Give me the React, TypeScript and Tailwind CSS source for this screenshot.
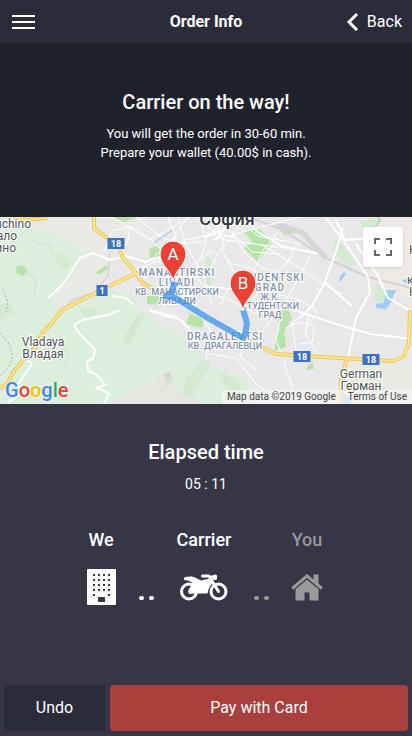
const blocks = [
  "M94 217 L112 217 L150 240 L190 217",
  "M104 252 L112 231 L130 226 L150 238 L172 262",
  "M130 226 L128 240 L120 256",
  "M136 217 L160 236 L178 244 L206 241",
  "M153 258 L172 240 L188 217",
  "M133 271 L160 260 L186 240 L206 236 L232 217",
  "M140 280 L158 272 L176 280 L196 262 L214 250",
  "M178 217 L186 246 L204 276 L212 306",
  "M200 217 L206 244 L196 268 L178 300",
  "M206 232 L226 240 L262 245 L316 252",
  "M214 217 L224 243 L205 278",
  "M232 232 L244 252 L262 268 L284 274",
  "M242 222 L222 250 L236 276 L220 304",
  "M278 232 L262 252 L248 284",
  "M262 245 L300 268 L322 284 L342 294",
  "M296 244 L288 262 L266 282 L250 304",
  "M310 256 L300 276 L286 300 L262 332",
  "M270 292 L300 300 L318 312 L302 332",
  "M206 292 L230 300 L256 314 L274 308",
  "M190 300 L210 330 L206 360",
  "M266 296 L280 320 L276 340 L284 362 L294 392",
  "M300 318 L292 322 L296 352",
  "M308 314 L306 336 L318 354",
  "M286 328 L298 322 L314 326 L312 342 L300 344",
  "M210 354 L236 358 L256 384 L276 399",
  "M150 310 L176 316 L190 330 L196 348",
  "M246 338 L240 356 L256 370",
  "M212 240 L300 217",
  "M222 224 L252 252 L280 254",
  "M236 217 L258 236 L300 244",
  "M226 262 L250 268 L278 286",
  "M168 217 L176 236 L170 250",
  "M158 262 L190 270 L204 286 L240 290",
  "M196 217 L214 232 L236 238",
];

const majorStreets = [
  "M343 227 L337 248 L325 282 L312 306 L300 318",
  "M336 220 L345 240 L372 238",
  "M326 218 L346 244 L368 277",
  "M368 277 L370 292 L356 318 L348 358",
  "M325 282 L338 294 L352 306",
  "M294 310 L330 322 L370 334 L412 339",
  "M356 244 L378 276 L388 298 L412 312",
  "M206 237 L246 219",
  "M216 240 L232 217",
  "M248 222 L258 232 L282 246 L318 254",
  "M48 298 L60 287 L68 277 L80 258 L93 253 L110 260 L127 256 L145 262 L160 257",
  "M120 310 L108 315 L82 320 L74 325 L78 332 L86 340 L95 350 L93 359 L87 361 L88 371 L96 374 L105 385 L96 388 L109 393 L104 404",
  "M149 310 L166 316 L180 319 L192 332",
  "M28 360 L32 364 L24 376 L18 384 L22 392 L8 403",
  "M112 296 L126 298 L134 305",
];

const highways = [
  "M94 217 L94 228 L107 238 L118 245 L123 258 L135 272 L143 283 L163 295",
  "M135 274 L107 287 L62 310 L52 323 L43 332 L35 348 L23 360 L13 373 L7 384 L0 388",
  "M13 216 L27 220 L48 218",
  "M243 338 L261 347 L276 354 L339 358 L393 361 L403 357 L409 343 L410 310",
  "M347 358 L341 380 L341 404",
];

function RoadShield({ x, y, label }: { x: number; y: number; label: string }) {
  const width = label.length > 1 ? 17 : 11;
  return (
    <g>
      <rect x={x - width / 2} y={y - 6} width={width} height="11" fill="#3a73c4" />
      <text x={x} y={y + 3} fontSize="9" fontWeight="700" fill="#fff" textAnchor="middle">
        {label}
      </text>
    </g>
  );
}

function Pin({ x, y, label }: { x: number; y: number; label: string }) {
  return (
    <g transform={`translate(${x} ${y})`}>
      <path
        d="M0 0 C-1 -11 -13 -17 -13 -28 A13 13 0 1 1 13 -28 C13 -17 1 -11 0 0 Z"
        fill="#ea4335"
        stroke="#fff"
        strokeWidth="1"
      />
      <text x="0" y="-22" fontSize="17" fill="#fff" textAnchor="middle">
        {label}
      </text>
    </g>
  );
}

function MapDrawing() {
  return (
    <svg
      className="block h-full w-full"
      viewBox="0 217 412 187"
      preserveAspectRatio="xMidYMid slice"
      fontFamily="Roboto, sans-serif"
      role="img"
      aria-label="Route map"
    >
      <rect x="0" y="217" width="412" height="187" fill="#e7e8e7" />
      <path d="M0 217 H92 L106 240 L104 270 L90 292 L50 310 L0 310 Z" fill="#e8eae3" />
      <path d="M0 226 L22 228 L48 232 L68 240 L88 250 L82 258 L68 279 L50 300 L62 310 L110 288 L132 296 L140 310 L158 324 L192 340 L206 366 L244 376 L262 404 H0 Z" fill="#dcefdc" />
      <path d="M20 217 L90 217 L102 240 L84 252 L60 236 L34 228 Z" fill="#eae9e4" />
      <path d="M112 404 L126 392 L148 386 L158 374 L170 374 L176 390 L192 394 L200 404 Z" fill="#e5e7df" />
      <path d="M140 310 L158 308 L176 318 L192 324 L190 336 L160 324 Z" fill="#e7e8e7" />
      <path d="M364 217 H412 V300 L388 296 L368 276 L384 250 Z" fill="#eeeae3" />
      <path d="M352 360 L412 362 V404 H330 L335 380 Z" fill="#e9ebe3" />
      <path d="M30 344 L48 340 L54 352 L40 360 L26 358 Z" fill="#e4e9e1" />
      <g fill="#d3e9d0">
        <path d="M0 304 L8 302 L14 312 L0 320 Z" />
        <path d="M122 340 L138 314 L146 312 L134 336 L128 346 Z" />
        <path d="M186 380 L204 358 L212 364 L190 396 L182 398 Z" />
        <path d="M60 252 L72 262 L66 270 L56 262 Z" />
        <path d="M80 310 L92 306 L100 312 L86 320 Z" />
        <path d="M216 370 L236 380 L252 404 L232 398 Z" />
        <path d="M336 238 L356 262 L348 268 L332 250 Z" />
        <path d="M376 282 L390 296 L384 312 L374 298 Z" />
        <path d="M360 222 L374 217 L384 219 L366 236 Z" />
        <path d="M206 255 L212 262 L210 286 L206 284 Z" />
      </g>
      <path d="M30 240 L50 246 L58 262 M24 268 L36 280 L34 296 M60 340 L68 354 L64 370 M130 330 L138 320 M160 392 L172 380" fill="none" stroke="#cfe0cd" strokeWidth="3" opacity=".4" />
      <path d="M164 374 L170 372 L172 378 L166 382 Z" fill="#d3d5d5" />
      <g fill="#b7e3ab">
        <path d="M16 266 L24 266 L27 270 L24 276 L17 274 Z" />
        <path d="M96 272 L107 265 L108 269 L98 275 Z" />
        <path d="M150 248 L158 246 L162 255 L155 260 L149 256 Z" />
        <path d="M147 296 L164 296 L163 305 L147 304 Z" />
        <path d="M244 232 L258 227 L272 242 L258 262 L244 248 L252 242 Z" />
        <path d="M280 230 L300 229 L298 232 L284 235 Z" />
        <path d="M275 311 L288 310 L292 318 L284 332 L286 347 L274 351 L276 338 L280 328 Z" />
        <path d="M190 313 L204 320 L202 328 L186 324 Z" />
        <path d="M308 366 L312 362 L314 369 L306 370 Z" />
        <path d="M112 217 H138 L124 222 Z" />
      </g>
      <g fill="#9ecdf7">
        <path d="M339 278 L344 272 L346 274 L340 282 Z" />
        <path d="M386 290 L396 290 L391 302 L386 309 L376 308 L376 304 L384 303 Z" />
        <path d="M402 280 L408 279 L406 284 Z" />
        <path d="M342 392 L352 399 L350 404 L342 404 Z" />
      </g>
      <path d="M248 217 L278 228 L300 241 L326 258 L368 277 L412 288" fill="none" stroke="#d2d3d5" strokeWidth="2" />
      <path d="M276 224 L302 232 L326 258" fill="none" stroke="#d6d6d8" strokeWidth="5" />
      <path d="M110 252 L108 276 L94 293 L72 300 L32 348 L10 373" fill="none" stroke="#c8cbcb" strokeWidth="1" />
      <path d="M2 288 L8 302 L6 312 M0 333 L8 342 L13 356 L9 366 L0 377" fill="none" stroke="#a9b0aa" strokeWidth="1" strokeDasharray="2 2" />
      <g fill="none" stroke="#fff" strokeLinejoin="round" strokeWidth="1">
        {blocks.map((d) => (
          <path key={d} d={d} />
        ))}
      </g>
      <g fill="none" stroke="#fff" strokeLinejoin="round" strokeWidth="2">
        {majorStreets.map((d) => (
          <path key={d} d={d} />
        ))}
      </g>
      <path d="M154 243 L172 230 M366 241 L380 220 L378 217" fill="none" stroke="#94bde0" strokeWidth="1" />
      <g fill="none" stroke="#edc95e" strokeLinejoin="round" strokeWidth="4">
        {highways.map((d) => (
          <path key={d} d={d} />
        ))}
      </g>
      <g fill="none" stroke="#ffe48d" strokeLinejoin="round" strokeWidth="2">
        {highways.map((d) => (
          <path key={d} d={d} />
        ))}
      </g>

      <RoadShield x={116} y={244} label="18" />
      <RoadShield x={102} y={291} label="1" />
      <RoadShield x={302} y={357} label="18" />
      <RoadShield x={371} y={360} label="18" />

      <g fill="#4e5359" stroke="#fff" strokeWidth="2" paintOrder="stroke" fontSize="12">
        <text x="31" y="228" textAnchor="end">uchino</text>
        <text x="17" y="240" textAnchor="end">ало</text>
        <text x="16" y="252" textAnchor="end">ино</text>
        <text x="43" y="346" textAnchor="middle">Vladaya</text>
        <text x="43" y="358" textAnchor="middle">Владая</text>
        <text x="361" y="378" textAnchor="middle">German</text>
        <text x="361" y="390" textAnchor="middle">Герман</text>
        <text x="409" y="254">К</text>
        <text x="407" y="284">к</text>
        <text x="409" y="296">К</text>
        <text x="227" y="225" textAnchor="middle" fontSize="18" fontWeight="500" fill="#34373b">София</text>
      </g>
      <g fill="#7f90ad" stroke="#fff" strokeWidth="2" paintOrder="stroke" fontSize="9" fontWeight="500" textAnchor="middle">
        <text x="177" y="276" fontSize="10" letterSpacing="1">MANASTIRSKI</text>
        <text x="177" y="286" fontSize="10" letterSpacing="1">LIVADI</text>
        <text x="177" y="295">КВ. МАНАСТИРСКИ</text>
        <text x="177" y="304">ЛИВАДИ</text>
        <text x="270" y="281" fontSize="10" letterSpacing="1">STUDENTSKI</text>
        <text x="270" y="291" fontSize="10" letterSpacing="1">GRAD</text>
        <text x="270" y="300">Ж.К.</text>
        <text x="270" y="309">СТУДЕНТСКИ</text>
        <text x="270" y="318">ГРАД</text>
        <text x="225" y="340" fontSize="10" letterSpacing="1">DRAGALEVTSI</text>
        <text x="225" y="349">КВ. ДРАГАЛЕВЦИ</text>
      </g>

      <path d="M175 282 L171 293 L166 296 L174 297 L206 317 L243 338 L245 335 L247 323 L243 310" fill="none" stroke="#2f8ff0" strokeOpacity=".7" strokeWidth="6" strokeLinejoin="round" />
      <Pin x={173} y={282} label="A" />
      <Pin x={243} y={311} label="B" />
    </svg>
  );
}

function GoogleLogo() {
  return (
    <div
      className="absolute bottom-0 left-[5px] text-[20px] leading-[28px] font-medium [text-shadow:0_0_2px_#fff]"
      aria-label="Google"
    >
      <span className="text-[#4285f4]">G</span>
      <span className="text-[#ea4335]">o</span>
      <span className="text-[#fbbc05]">o</span>
      <span className="text-[#4285f4]">g</span>
      <span className="text-[#34a853]">l</span>
      <span className="text-[#ea4335]">e</span>
    </div>
  );
}

function BuildingIcon() {
  const rows = [6, 11, 16, 21, 26];
  const columns = [6, 11, 16, 21];
  return (
    <svg className="h-9 w-[29px]" viewBox="0 0 29 36" aria-hidden="true">
      <rect width="29" height="36" rx="1" fill="#fff" />
      {rows.map((y) =>
        columns
          .filter((x) => y < 26 || x === 6 || x === 21)
          .map((x) => <rect key={`${x}-${y}`} x={x} y={y - 1} width="2" height="2" fill="#363647" />),
      )}
      <rect x="11" y="28" width="7" height="5" fill="#363647" />
    </svg>
  );
}

function MotorcycleIcon() {
  return (
    <svg className="h-[27px] w-12" viewBox="0 0 48 27" aria-hidden="true">
      <g fill="none" stroke="#fff">
        <circle cx="9" cy="17.5" r="7.5" strokeWidth="3" />
        <circle cx="38.5" cy="17.5" r="7.5" strokeWidth="3" />
        <path d="M22.5 2H29L38.5 17.5" strokeWidth="3" strokeLinecap="round" strokeLinejoin="round" />
      </g>
      <path d="M4 3.500C9 2 13.500 2.500 16 4L21 6.500L30 4.500L33 9C30 11.500 28.500 14.500 27.500 19.500H17L9 20L8 17L12.500 9C10 7 7.500 6 4 6Z" fill="#fff" />
      <path d="M30 2L35.500 .5Q37 .5 37 2V4.500Q37 6 35.500 6L32 5.500Z" fill="#fff" />
    </svg>
  );
}

function HomeIcon() {
  return (
    <svg className="h-[27px] w-8" viewBox="0 0 32 27" fill="currentColor" aria-hidden="true">
      <path d="M16 5.500L27.500 15V26.500H18.500V18.500H13.500V26.500H4.500V15Z" />
      <path d="M1.200 14.500L16 2L30.800 14.500" fill="none" stroke="currentColor" strokeWidth="3" />
      <path d="M4 14L16 4L28 14" fill="none" stroke="#363647" strokeWidth="0.700" transform="translate(0 .8)" />
      <path d="M22.500 0.500H27.500V11L22.500 7Z" />
    </svg>
  );
}

function Dots({ className }: { className: string }) {
  return (
    <div className={`flex w-[15px] shrink-0 justify-between pt-[70px] ${className}`} aria-hidden="true">
      <i className="h-1 w-[5px] rounded-full bg-current" />
      <i className="h-1 w-[5px] rounded-full bg-current" />
    </div>
  );
}

export default function App() {
  return (
    <div className="flex min-h-screen flex-col bg-[#363647] font-['Roboto',sans-serif] text-white">
      <header className="grid h-[43px] grid-cols-3 items-center bg-[#2b2c39]">
        <button type="button" aria-label="Menu" className="ml-3 w-[23px]">
          <svg className="block h-4 w-[23px]" viewBox="0 0 23 16" stroke="#fff" strokeWidth="2" aria-hidden="true">
            <path d="M0 2H23M0 8H23M0 14H23" />
          </svg>
        </button>
        <h1 className="text-center text-base font-bold">Order Info</h1>
        <button type="button" className="mr-[10px] flex items-center justify-self-end text-base">
          <svg className="mr-2 h-[18px] w-3" viewBox="0 0 12 18" fill="none" stroke="#fff" strokeWidth="3" aria-hidden="true">
            <path d="M10 1 L2 9 L10 17" />
          </svg>
          Back
        </button>
      </header>

      <section className="bg-[#20222b] pt-[45px] pb-[55px] text-center">
        <h2 className="text-xl leading-7 font-medium">Carrier on the way!</h2>
        <p className="mt-2 text-[13px] leading-[19px]">
          You will get the order in 30-60 min.
          <br />
          Prepare your wallet (40.00$ in cash).
        </p>
      </section>

      <section className="relative h-[187px] overflow-hidden">
        <MapDrawing />
        <button
          type="button"
          aria-label="Toggle fullscreen view"
          className="absolute top-[10px] right-[9px] flex size-10 items-center justify-center rounded-xs bg-white shadow"
        >
          <svg className="size-[18px]" viewBox="0 0 18 18" fill="none" stroke="#666" strokeWidth="2" aria-hidden="true">
            <path d="M1 6V1H6M12 1H17V6M17 12V17H12M6 17H1V12" />
          </svg>
        </button>
        <GoogleLogo />
        <div className="absolute right-0 bottom-0 flex h-[14px] items-center gap-3 bg-[#f5f5f5]/70 pr-[5px] pl-[5px] text-[10px] leading-[14px] text-[#444]">
          <span>Map data ©2019 Google</span>
          <a href="#terms">Terms of Use</a>
        </div>
      </section>

      <section className="pt-[34px] text-center">
        <h2 className="text-xl leading-7 font-medium">Elapsed time</h2>
        <p className="mt-2 text-sm leading-5">05 : 11</p>
      </section>

      <section className="mt-8 flex justify-center pr-1 text-lg leading-7 font-medium">
        <div className="flex w-[60px] flex-col items-center">
          <h3>We</h3>
          <div className="mt-[15px] flex h-9 items-center">
            <BuildingIcon />
          </div>
        </div>
        <Dots className="ml-2 text-white" />
        <div className="flex w-[100px] flex-col items-center">
          <h3>Carrier</h3>
          <div className="mt-[15px] flex h-9 items-center">
            <MotorcycleIcon />
          </div>
        </div>
        <Dots className="text-[#999]" />
        <div className="ml-2 flex w-[60px] flex-col items-center text-[#999]">
          <h3>You</h3>
          <div className="mt-[15px] flex h-9 items-center">
            <HomeIcon />
          </div>
        </div>
      </section>

      <footer className="mt-auto flex gap-[5px] px-1 pb-[5px]">
        <button type="button" className="h-[46px] w-1/4 rounded bg-[#2b2c39] text-base">
          Undo
        </button>
        <button type="button" className="h-[46px] flex-1 rounded bg-[#a9403d] text-base">
          Pay with Card
        </button>
      </footer>
    </div>
  );
}
